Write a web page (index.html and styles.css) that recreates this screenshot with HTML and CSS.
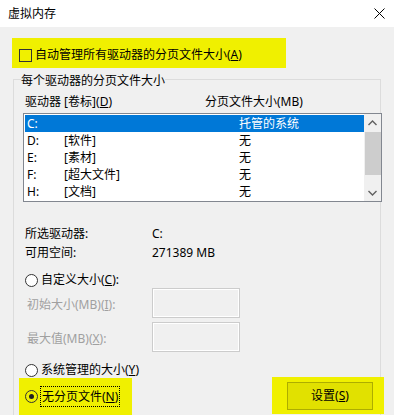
FILE: index.html
```html
<!DOCTYPE html>
<html lang="zh-CN">
<head>
  <meta charset="UTF-8">
  <meta name="viewport" content="width=device-width, initial-scale=1.0">
  <title>虚拟内存</title>
  <link rel="stylesheet" href="styles.css">
</head>
<body>

  <div class="titlebar">
    <span>虚拟内存</span>
    <svg class="close" width="11" height="11" viewBox="0 0 11 11">
      <path d="M0.5 0.5 L10.5 10.5 M10.5 0.5 L0.5 10.5" stroke="#000" stroke-width="1" fill="none"/>
    </svg>
  </div>

  <div class="auto mark">
    <span class="check"></span>
    <span>自动管理所有驱动器的分页文件大小(<u>A</u>)</span>
  </div>

  <fieldset class="group">
    <legend>每个驱动器的分页文件大小</legend>

    <div class="list-head">
      <span class="col-drive">驱动器 [卷标](<u>D</u>)</span>
      <span>分页文件大小(MB)</span>
    </div>

    <div class="listbox">
      <div class="rows">
        <div class="row selected"><span class="c1">C:</span><span class="c2"></span><span>托管的系统</span></div>
        <div class="row"><span class="c1">D:</span><span class="c2">[软件]</span><span>无</span></div>
        <div class="row"><span class="c1">E:</span><span class="c2">[素材]</span><span>无</span></div>
        <div class="row"><span class="c1">F:</span><span class="c2">[超大文件]</span><span>无</span></div>
        <div class="row"><span class="c1">H:</span><span class="c2">[文档]</span><span>无</span></div>
      </div>
      <div class="scrollbar">
        <div class="arrow">
          <svg width="9" height="6" viewBox="0 0 9 6"><path d="M0.5 5 L4.5 1 L8.5 5" stroke="#606060" stroke-width="1.4" fill="none"/></svg>
        </div>
        <div class="track"><div class="thumb"></div></div>
        <div class="arrow">
          <svg width="9" height="6" viewBox="0 0 9 6"><path d="M0.5 1 L4.5 5 L8.5 1" stroke="#606060" stroke-width="1.4" fill="none"/></svg>
        </div>
      </div>
    </div>

    <div class="info first">
      <span class="info-label">所选驱动器:</span>
      <span>C:</span>
    </div>
    <div class="info">
      <span class="info-label">可用空间:</span>
      <span>271389 MB</span>
    </div>

    <div class="radio-row custom">
      <span class="radio"></span>
      <span>自定义大小(<u>C</u>):</span>
    </div>

    <div class="size-row">
      <span class="size-label">初始大小(MB)(<u>I</u>):</span>
      <span class="size-box"></span>
    </div>
    <div class="size-row second">
      <span class="size-label">最大值(MB)(<u>X</u>):</span>
      <span class="size-box"></span>
    </div>

    <div class="radio-row system">
      <span class="radio"></span>
      <span>系统管理的大小(<u>Y</u>)</span>
    </div>

    <div class="bottom">
      <div class="nofile mark">
        <span class="radio checked"></span>
        <span class="focus">无分页文件(<u>N</u>)</span>
      </div>
      <div class="set-wrap mark">
        <button class="set-btn">设置(<u>S</u>)</button>
      </div>
    </div>
  </fieldset>

</body>
</html>
```

FILE: styles.css
```css
body {
  margin: 0;
  width: 394px;
  height: 415px;
  overflow: hidden;
  background: #f0f0f0;
  font-family: "Noto Sans", "Noto Sans CJK SC", sans-serif;
  font-size: 12px;
  line-height: 16px;
  color: #000;
}
u {
  text-decoration: underline;
  text-underline-offset: 1px;
}
.titlebar {
  height: 27px;
  background: #fff;
  display: flex;
  align-items: center;
  justify-content: space-between;
  padding: 0 9px 0 8px;
}
.mark {
  background: #f0f000;
}
.auto {
  box-sizing: border-box;
  margin: 11px 0 0 12px;
  width: 274px;
  height: 30px;
  padding: 9px 0 5px 7px;
  display: flex;
  align-items: center;
  gap: 3px;
}
.check {
  box-sizing: border-box;
  width: 13px;
  height: 13px;
  border: 1px solid #333;
}
.group {
  margin: 1px 0 0 13px;
  width: 368px;
  box-sizing: border-box;
  border: 1px solid #dcdcdc;
  border-bottom: none;
  padding: 0 0 2px 11px;
}
.group legend {
  padding: 4px 0 0 0;
  margin-left: -4px;
  line-height: 16px;
}
.list-head {
  display: flex;
  margin-top: 5px;
}
.col-drive {
  width: 180px;
}
.listbox {
  margin: 3px -2px 0 -2px;
  height: 89px;
  box-sizing: border-box;
  border: 1px solid #828790;
  background: #fff;
  padding: 1px 0 0 1px;
  display: flex;
}
.rows {
  flex: 1;
}
.row {
  display: flex;
  height: 17px;
  line-height: 17px;
  padding-left: 2px;
}
.row.selected {
  background: #0078d7;
  color: #fff;
}
.c1 {
  width: 37px;
}
.c2 {
  width: 175px;
}
.scrollbar {
  width: 17px;
  margin-top: -1px;
  background: #f0f0f0;
  display: flex;
  flex-direction: column;
}
.arrow {
  height: 17px;
  display: flex;
  align-items: center;
  justify-content: center;
}
.track {
  flex: 1;
  padding: 1px 0 0 1px;
}
.thumb {
  height: 43px;
  background: #cdcdcd;
}
.info {
  display: flex;
}
.info.first {
  margin-top: 24px;
}
.info + .info {
  margin-top: 3px;
}
.info-label {
  width: 127px;
}
.radio-row {
  display: flex;
  align-items: center;
  gap: 3px;
}
.radio-row.custom {
  margin-top: 11px;
}
.radio-row.system {
  margin-top: 10px;
}
.radio {
  box-sizing: border-box;
  width: 13px;
  height: 13px;
  border: 1px solid #333;
  border-radius: 50%;
  background: #fff;
  display: flex;
  align-items: center;
  justify-content: center;
}
.radio.checked {
  background: transparent;
}
.radio.checked::after {
  content: "";
  width: 5px;
  height: 5px;
  border-radius: 50%;
  background: #222;
}
.size-row {
  display: flex;
  align-items: center;
  color: #a0a0a0;
}
.size-row.second {
  margin-top: 4px;
}
.size-label {
  width: 125px;
  padding-left: 2px;
  padding-top: 3px;
}
.size-box {
  box-sizing: border-box;
  width: 88px;
  height: 30px;
  border: 1px solid #cccccc;
  box-shadow: inset 0 0 0 1px #fff;
}
.bottom {
  display: flex;
  justify-content: space-between;
  align-items: flex-start;
  margin: 0 -4px 0 -6px;
}
.nofile {
  box-sizing: border-box;
  width: 113px;
  height: 37px;
  padding-left: 6px;
  display: flex;
  align-items: center;
  gap: 3px;
}
.focus {
  outline: 1px dotted #000;
  padding: 1px;
  line-height: 17px;
}
.set-wrap {
  box-sizing: border-box;
  width: 112px;
  height: 37px;
  margin-top: -1px;
  padding: 5px 11px 4px 15px;
}
.set-btn {
  box-sizing: border-box;
  width: 86px;
  height: 28px;
  border: 1px solid #adad00;
  background: #e1e100;
  font: inherit;
  color: #000;
  padding: 0;
}
```
